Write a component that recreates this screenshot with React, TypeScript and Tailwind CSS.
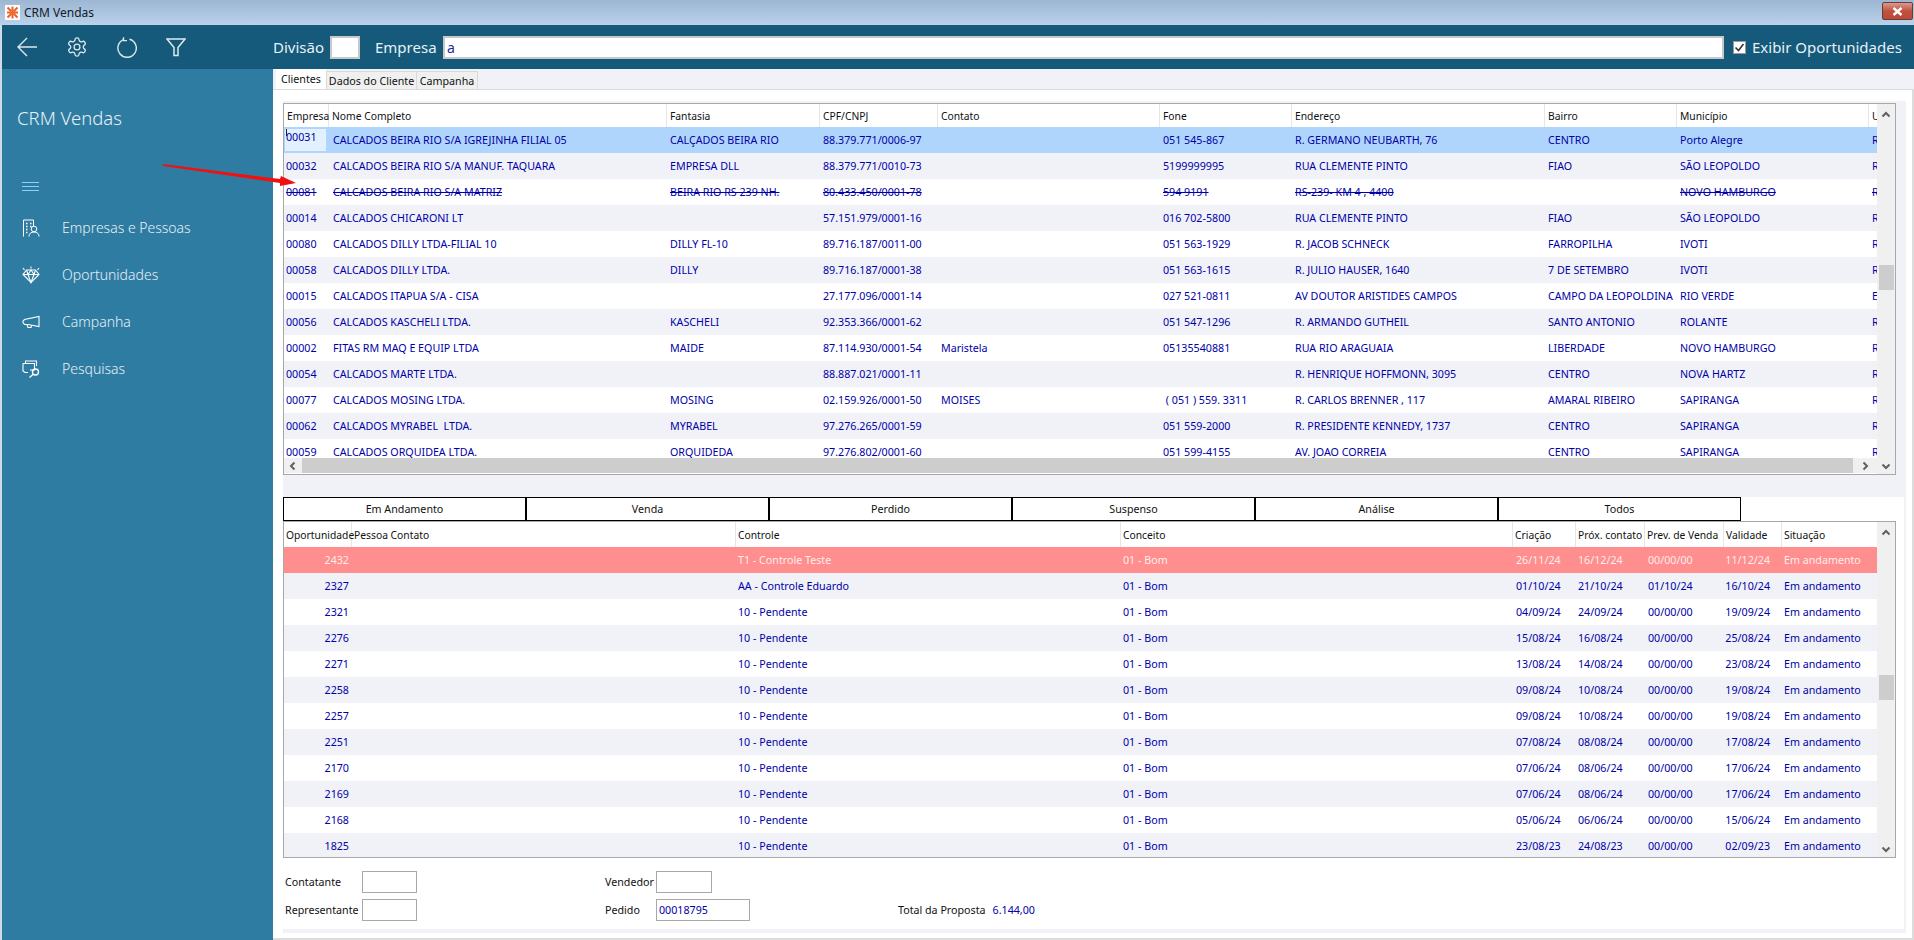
import React from "react";

const clientes = [
  ["00031", "CALCADOS BEIRA RIO S/A IGREJINHA FILIAL 05", "CALÇADOS BEIRA RIO", "88.379.771/0006-97", "", "051 545-867", "R. GERMANO NEUBARTH, 76", "CENTRO", "Porto Alegre", "R"],
  ["00032", "CALCADOS BEIRA RIO S/A MANUF. TAQUARA", "EMPRESA DLL", "88.379.771/0010-73", "", "5199999995", "RUA CLEMENTE PINTO", "FIAO", "SÃO LEOPOLDO", "R"],
  ["00081", "CALCADOS BEIRA RIO S/A MATRIZ", "BEIRA RIO RS 239 NH.", "80.433.450/0001-78", "", "594 9191", "RS-239- KM 4 , 4400", "", "NOVO HAMBURGO", "R"],
  ["00014", "CALCADOS CHICARONI LT", "", "57.151.979/0001-16", "", "016 702-5800", "RUA CLEMENTE PINTO", "FIAO", "SÃO LEOPOLDO", "R"],
  ["00080", "CALCADOS DILLY LTDA-FILIAL 10", "DILLY FL-10", "89.716.187/0011-00", "", "051 563-1929", "R. JACOB SCHNECK", "FARROPILHA", "IVOTI", "R"],
  ["00058", "CALCADOS DILLY LTDA.", "DILLY", "89.716.187/0001-38", "", "051 563-1615", "R. JULIO HAUSER, 1640", "7 DE SETEMBRO", "IVOTI", "R"],
  ["00015", "CALCADOS ITAPUA S/A - CISA", "", "27.177.096/0001-14", "", "027 521-0811", "AV DOUTOR ARISTIDES CAMPOS", "CAMPO DA LEOPOLDINA", "RIO VERDE", "E"],
  ["00056", "CALCADOS KASCHELI LTDA.", "KASCHELI", "92.353.366/0001-62", "", "051 547-1296", "R. ARMANDO GUTHEIL", "SANTO ANTONIO", "ROLANTE", "R"],
  ["00002", "FITAS RM MAQ E EQUIP LTDA", "MAIDE", "87.114.930/0001-54", "Maristela", "05135540881", "RUA RIO ARAGUAIA", "LIBERDADE", "NOVO HAMBURGO", "R"],
  ["00054", "CALCADOS MARTE LTDA.", "", "88.887.021/0001-11", "", "", "R. HENRIQUE HOFFMONN, 3095", "CENTRO", "NOVA HARTZ", "R"],
  ["00077", "CALCADOS MOSING LTDA.", "MOSING", "02.159.926/0001-50", "MOISES", " ( 051 ) 559. 3311", "R. CARLOS BRENNER , 117", "AMARAL RIBEIRO", "SAPIRANGA", "R"],
  ["00062", "CALCADOS MYRABEL  LTDA.", "MYRABEL", "97.276.265/0001-59", "", "051 559-2000", "R. PRESIDENTE KENNEDY, 1737", "CENTRO", "SAPIRANGA", "R"],
  ["00059", "CALCADOS ORQUIDEA LTDA.", "ORQUIDEDA", "97.276.802/0001-60", "", "051 599-4155", "AV. JOAO CORREIA", "CENTRO", "SAPIRANGA", "R"],
];

const clientesHeader = ["Empresa", "Nome Completo", "Fantasia", "CPF/CNPJ", "Contato", "Fone", "Endereço", "Bairro", "Município", "U"];

const oportunidades = [
  ["2432", "T1 - Controle Teste", "26/11/24", "16/12/24", "00/00/00", "11/12/24"],
  ["2327", "AA - Controle Eduardo", "01/10/24", "21/10/24", "01/10/24", "16/10/24"],
  ["2321", "10 - Pendente", "04/09/24", "24/09/24", "00/00/00", "19/09/24"],
  ["2276", "10 - Pendente", "15/08/24", "16/08/24", "00/00/00", "25/08/24"],
  ["2271", "10 - Pendente", "13/08/24", "14/08/24", "00/00/00", "23/08/24"],
  ["2258", "10 - Pendente", "09/08/24", "10/08/24", "00/00/00", "19/08/24"],
  ["2257", "10 - Pendente", "09/08/24", "10/08/24", "00/00/00", "19/08/24"],
  ["2251", "10 - Pendente", "07/08/24", "08/08/24", "00/00/00", "17/08/24"],
  ["2170", "10 - Pendente", "07/06/24", "08/06/24", "00/00/00", "17/06/24"],
  ["2169", "10 - Pendente", "07/06/24", "08/06/24", "00/00/00", "17/06/24"],
  ["2168", "10 - Pendente", "05/06/24", "06/06/24", "00/00/00", "15/06/24"],
  ["1825", "10 - Pendente", "23/08/23", "24/08/23", "00/00/00", "02/09/23"],
];

const oportHeader = ["Oportunidade", "Pessoa Contato", "Controle", "Conceito", "Criação", "Próx. contato", "Prev. de Venda", "Validade", "Situação"];

const abas = ["Em Andamento", "Venda", "Perdido", "Suspenso", "Análise", "Todos"];

const clientesCols = "grid grid-cols-[45px_338px_153px_118px_222px_132px_253px_132px_192px_9px]";
const oportCols = "grid grid-cols-[68px_384px_385px_392px_63px_69px_79px_58px_96px]";

const Chevron = ({ dir }: { dir: "up" | "down" | "left" | "right" }) => {
  const d = {
    up: "M1.5 6.5 L5 3 L8.5 6.5",
    down: "M1.5 3.5 L5 7 L8.5 3.5",
    left: "M6.5 1.5 L3 5 L6.5 8.5",
    right: "M3.5 1.5 L7 5 L3.5 8.5",
  }[dir];
  return (
    <svg width="10" height="10" viewBox="0 0 10 10" fill="none">
      <path d={d} stroke="#606060" strokeWidth="2" />
    </svg>
  );
};

const VScroll = ({ before, thumb }: { before: string; thumb: string }) => (
  <div className="w-[18px] shrink-0 bg-[#f0f0f0] flex flex-col items-center">
    <div className="h-[17px] flex items-center justify-center shrink-0 mt-[2px]">
      <Chevron dir="up" />
    </div>
    <div className={before} />
    <div className={thumb} />
    <div className="flex-1" />
    <div className="h-[17px] flex items-center justify-center shrink-0">
      <Chevron dir="down" />
    </div>
  </div>
);

const SideItem = ({ icon, label }: { icon: React.ReactNode; label: string }) => (
  <div className="h-[47px] flex items-center pl-[20px] gap-[22px] text-[14px] font-light text-[#e6f0f5]">
    <div className="w-[18px] h-[18px] flex items-center justify-center">{icon}</div>
    <span>{label}</span>
  </div>
);

const IconEmpresas = () => (
  <svg width="18" height="18" viewBox="0 0 18 18" fill="none" stroke="#fff" strokeWidth="1">
    <path d="M1.5 17.5 V1 H11.5 V7" />
    <path d="M4 4.5 H5.5 M8 4.5 H9.5 M4 7.5 H5.5 M8 7.5 H9.5 M4 10.5 H5.5 M4 13.5 H5.5" strokeWidth="1.5" />
    <circle cx="12" cy="10" r="2.8" />
    <path d="M7 17.5 C7 14.5 9 13 12 13 C15 13 17 14.5 17 17.5" />
  </svg>
);

const IconDiamante = () => (
  <svg width="18" height="18" viewBox="0 0 18 18" fill="none" stroke="#fff" strokeWidth="1.1">
    <path d="M4.5 4 H13.5 L17 8.5 L9 16.5 L1 8.5 Z" />
    <path d="M1 8.5 H17 M4.5 4 L6 8.5 L9 16.5 L12 8.5 L13.5 4 M6 8.5 L9 4 L12 8.5" />
    <path d="M1 2 L2.5 4 M17 2 L15.5 4 M9 0.5 V2.5" />
  </svg>
);

const IconCampanha = () => (
  <svg width="18" height="18" viewBox="0 0 18 18" fill="none" stroke="#fff" strokeWidth="1.1">
    <path d="M17 3.5 V13.5 L6 11.5 H2.5 L1 9.5 V8 L2.5 6.5 Z" />
    <path d="M5 12 L6 14.5 H9 L9.5 12.5" />
  </svg>
);

const IconPesquisas = () => (
  <svg width="18" height="18" viewBox="0 0 18 18" fill="none" stroke="#fff" strokeWidth="1.1">
    <path d="M3.5 3.5 V1 H14.5 V6" />
    <path d="M1 3.5 H12.5 V10 H8 M6 12.5 H3 L1 11 V3.5" />
    <circle cx="13.5" cy="12" r="3" strokeWidth="1.3" />
    <path d="M11.2 14.2 L7.5 17.5" strokeWidth="1.3" />
  </svg>
);

export default function App() {
  return (
    <div className="relative w-[1914px] h-[940px] overflow-hidden bg-white flex flex-col font-['Noto_Sans',sans-serif]">
      {/* barra de titulo */}
      <div className="h-[25px] shrink-0 bg-gradient-to-b from-[#9db6d2] to-[#bad2ea] flex items-center pl-[5px] pr-[1px]">
        <svg width="15" height="15" viewBox="0 0 15 15">
          <rect width="15" height="15" fill="#fff" />
          <path d="M2.5 2.5 L6 6 M12.5 2.5 L9 6 M2.5 12.5 L6 9 M12.5 12.5 L9 9 M7.5 1.5 V13.5 M2 7.5 H13" stroke="#e8642a" strokeWidth="2" />
        </svg>
        <span className="ml-[4px] text-[12px] text-[#10202c]">CRM Vendas</span>
        <div className="ml-auto w-[31px] h-[18px] mb-[3px] rounded-[2px] border border-[#6b3a3a] bg-gradient-to-b from-[#d99a8c] via-[#c0513f] to-[#bb4a38] flex items-center justify-center">
          <svg width="11" height="9" viewBox="0 0 11 9">
            <path d="M1.5 1 L9.5 8 M9.5 1 L1.5 8" stroke="#fff" strokeWidth="2.4" />
          </svg>
        </div>
      </div>

      {/* barra de filtros */}
      <div className="h-[44px] shrink-0 bg-[#155a7b] border-l-2 border-[#cfdbe6] flex items-center pl-[15px] text-[#e8f1f6] text-[15px]">
        <div className="flex items-center gap-[29px] w-[256px]">
          <svg width="20" height="20" viewBox="0 0 20 20" fill="none" stroke="#dfe8ee" strokeWidth="1.4">
            <path d="M20 10 H1 M10 1 L1 10 L10 19" />
          </svg>
          <svg width="22" height="22" viewBox="0 0 24 24" fill="none" stroke="#dfe8ee" strokeWidth="1.4">
            <path d="M12.22 2h-.44a2 2 0 0 0-2 2v.18a2 2 0 0 1-1 1.73l-.43.25a2 2 0 0 1-2 0l-.15-.08a2 2 0 0 0-2.73.73l-.22.38a2 2 0 0 0 .73 2.73l.15.1a2 2 0 0 1 1 1.72v.51a2 2 0 0 1-1 1.74l-.15.09a2 2 0 0 0-.73 2.73l.22.38a2 2 0 0 0 2.73.73l.15-.08a2 2 0 0 1 2 0l.43.25a2 2 0 0 1 1 1.73V20a2 2 0 0 0 2 2h.44a2 2 0 0 0 2-2v-.18a2 2 0 0 1 1-1.73l.43-.25a2 2 0 0 1 2 0l.15.08a2 2 0 0 0 2.73-.73l.22-.39a2 2 0 0 0-.73-2.73l-.15-.08a2 2 0 0 1-1-1.74v-.5a2 2 0 0 1 1-1.74l.15-.09a2 2 0 0 0 .73-2.73l-.22-.38a2 2 0 0 0-2.73-.73l-.15.08a2 2 0 0 1-2 0l-.43-.25a2 2 0 0 1-1-1.73V4a2 2 0 0 0-2-2z" />
            <circle cx="12" cy="12" r="3.2" />
          </svg>
          <svg width="20" height="21" viewBox="0 0 20 21" fill="none" stroke="#dfe8ee" strokeWidth="1.4">
            <path d="M6.5 2.6 A9.2 9.2 0 1 0 12.5 2.2" />
            <path d="M6.5 0.2 V3.6 H10" />
          </svg>
          <svg width="20" height="19" viewBox="0 0 20 19" fill="none" stroke="#dfe8ee" strokeWidth="1.5">
            <path d="M1 1 H19 L12 9.5 V17.5 H8 V9.5 Z" />
          </svg>
        </div>
        <span className="w-[55px]">Divisão</span>
        <div className="ml-[2px] w-[30px] h-[23px] bg-white border-2 border-[#c8c8c8]" />
        <span className="ml-[15px] w-[63px]">Empresa</span>
        <div className="ml-[5px] w-[1281px] h-[23px] bg-white border-2 border-[#c8c8c8] pl-[2px] flex items-center text-[14px] text-[#1a2f9c]">a</div>
        <div className="ml-[9px] w-[13px] h-[13px] border border-[#9a9a9a] bg-white flex items-center justify-center">
          <svg width="11" height="11" viewBox="0 0 11 11" fill="none">
            <path d="M1.5 5.5 L4.5 8.5 L9.5 2" stroke="#333" strokeWidth="1.6" />
          </svg>
        </div>
        <span className="ml-[6px] whitespace-nowrap">Exibir Oportunidades</span>
      </div>

      <div className="flex-1 flex min-h-0">
        {/* menu lateral */}
        <div className="w-[273px] shrink-0 bg-[#2f7ca3] border-l-2 border-[#cfdbe6] flex flex-col">
          <div className="pl-[15px] pt-[35px] h-[100px] text-[18.5px] font-light text-[#e6f0f5]">CRM Vendas</div>
          <div className="pl-[20px] mt-[13px] h-[22px]">
            <div className="w-[17px] flex flex-col gap-[3px]">
              <div className="h-px bg-[#8fd0f5]" />
              <div className="h-px bg-[#8fd0f5]" />
              <div className="h-px bg-[#8fd0f5]" />
            </div>
          </div>
          <SideItem icon={<IconEmpresas />} label="Empresas e Pessoas" />
          <SideItem icon={<IconDiamante />} label="Oportunidades" />
          <SideItem icon={<IconCampanha />} label="Campanha" />
          <SideItem icon={<IconPesquisas />} label="Pesquisas" />
        </div>

        {/* conteudo */}
        <div className="flex-1 min-w-0 flex flex-col text-[10.7px] leading-[14px]">
          <div className="h-[20px] shrink-0 bg-[#f1f2f8] flex items-end pl-[3px] text-[#111]">
            <div className="w-[50px] h-[20px] bg-white flex items-center justify-center">Clientes</div>
            <div className="w-[91px] h-[18px] bg-[#f0f0f0] border border-[#d9d9d9] border-b-0 flex items-center justify-center">Dados do Cliente</div>
            <div className="w-[61px] h-[18px] bg-[#f0f0f0] border border-[#d9d9d9] border-l-0 border-b-0 flex items-center justify-center">Campanha</div>
          </div>
          <div className="flex-1 min-h-0 bg-white border-t border-b-2 border-r-2 border-[#dcdcdc] pl-[10px] pr-[6px] pt-[11px] pb-[5px] flex flex-col">
            <div className="flex-1 min-h-0 bg-[#f1f2f8] pr-[2px] pb-[4px] flex flex-col">
              {/* grade de clientes */}
              <div className="mt-[2px] mr-[8px] h-[372px] shrink-0 border border-[#a8a8a8] bg-white flex">
                <div className="flex-1 min-w-0 flex flex-col overflow-hidden">
                  <div className={clientesCols + " h-[23px] shrink-0 text-[#111] text-[10.3px]"}>
                    {clientesHeader.map((h) => (
                      <div key={h} className="border-r border-[#e6e6e6] flex items-center pl-[3px] whitespace-nowrap last:border-r-0">
                        {h}
                      </div>
                    ))}
                  </div>
                  <div className="h-[331px] shrink-0 overflow-hidden">
                    {clientes.map((r, i) => (
                      <div
                        key={r[0]}
                        className={
                          clientesCols +
                          " h-[26px] items-center pb-[1px] text-[#0000a8] " +
                          (i === 0 ? "bg-[#b0d5fd]" : i % 2 === 1 ? "bg-[#f1f2f8]" : "bg-white") +
                          (i === 2 ? " line-through" : "")
                        }
                      >
                        {r.map((c, j) =>
                          i === 0 && j === 0 ? (
                            <div key={j} className="relative ml-[1px] mr-[3px] h-[22px] mt-[1px] bg-[#e3f0ff] pl-[1px] pt-[1px] text-[#0000a8]">
                              {c}
                              <div className="absolute left-[1px] top-0 w-px h-[7px] bg-[#222]" />
                            </div>
                          ) : (
                            <div key={j} className={(j === 0 ? "pl-[2px]" : j === 1 ? "pl-[4px]" : "pl-[3px]") + " whitespace-pre"}>
                              {c}
                            </div>
                          )
                        )}
                      </div>
                    ))}
                  </div>
                  <div className="h-[15px] shrink-0 bg-[#f0f0f0] flex items-center">
                    <div className="w-[18px] flex justify-center">
                      <Chevron dir="left" />
                    </div>
                    <div className="w-[1551px] h-full bg-[#cdcdcd]" />
                    <div className="flex-1 flex justify-center">
                      <Chevron dir="right" />
                    </div>
                  </div>
                </div>
                <VScroll before="h-[142px] shrink-0" thumb="w-[15px] h-[25px] bg-[#cdcdcd] shrink-0" />
              </div>

              {/* oportunidades */}
              <div className="mt-[22px] flex-1 min-h-0 bg-white">
                <div className="flex h-[24px]">
                  {abas.map((a) => (
                    <div key={a} className="w-[243px] border border-black flex items-center justify-center text-[#111]">
                      {a}
                    </div>
                  ))}
                </div>
                <div className="mr-[8px] h-[337px] border border-[#a8a8a8] bg-white flex">
                  <div className="flex-1 min-w-0 flex flex-col">
                    <div className={oportCols + " h-[25px] shrink-0 text-[#111] text-[10.3px]"}>
                      {oportHeader.map((h) => (
                        <div key={h} className="border-r border-[#e6e6e6] flex items-center pl-[2px] whitespace-nowrap last:border-r-0">
                          {h}
                        </div>
                      ))}
                    </div>
                    <div className="flex-1 min-h-0 overflow-hidden">
                      {oportunidades.map((r, i) => (
                        <div
                          key={r[0]}
                          className={
                            oportCols +
                            " h-[26px] items-center pb-[1px] " +
                            (i === 0 ? "bg-[#ff8e8e] text-[#ffecec]" : i % 2 === 1 ? "bg-[#f1f2f8] text-[#0000a8]" : "bg-white text-[#0000a8]")
                          }
                        >
                          <div className="text-right pr-[3px]">{r[0]}</div>
                          <div />
                          <div className="pl-[2px]">{r[1]}</div>
                          <div className="pl-[2px]">01 - Bom</div>
                          <div className="pl-[3px]">{r[2]}</div>
                          <div className="pl-[2px]">{r[3]}</div>
                          <div className="pl-[3px]">{r[4]}</div>
                          <div className="text-right pr-[12px]">{r[5]}</div>
                          <div className="pl-[2px] whitespace-nowrap">Em andamento</div>
                        </div>
                      ))}
                    </div>
                  </div>
                  <VScroll before="h-[134px] shrink-0" thumb="w-[15px] h-[25px] bg-[#cdcdcd] shrink-0" />
                </div>

                {/* rodape */}
                <div className="pt-[13px] pl-[2px] grid grid-cols-[77px_243px_51px_auto] grid-rows-[22px_22px] gap-y-[6px] items-center text-[#111]">
                  <span className="pb-[1px]">Contatante</span>
                  <div className="w-[55px] h-[22px] border border-[#a8a8a8] bg-white" />
                  <span className="pb-[1px]">Vendedor</span>
                  <div className="w-[56px] h-[22px] border border-[#a8a8a8] bg-white" />
                  <span className="pb-[1px]">Representante</span>
                  <div className="w-[55px] h-[22px] border border-[#a8a8a8] bg-white" />
                  <span className="pb-[1px]">Pedido</span>
                  <div className="flex items-center">
                    <div className="w-[94px] h-[22px] border border-[#a8a8a8] bg-white pl-[2px] flex items-center text-[#0000a8]">00018795</div>
                    <span className="ml-[148px] pb-[1px]">Total da Proposta</span>
                    <span className="ml-[7px] pb-[1px] text-[#0000a8]">6.144,00</span>
                  </div>
                </div>
              </div>
            </div>
          </div>
        </div>
      </div>

      {/* seta vermelha sobre a grade */}
      <svg className="absolute left-[160px] top-[160px]" width="140" height="30" viewBox="0 0 140 30">
        <path d="M3 4 L3 6 L120 23 L120 26 L136 23 L121 16 L120 19 Z" fill="#f01010" />
      </svg>
    </div>
  );
}
